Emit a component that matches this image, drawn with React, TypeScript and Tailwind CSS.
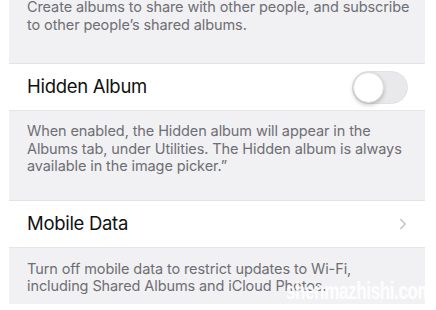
import { ChevronRight } from 'lucide-react';

function Toggle() {
  return (
    <div className="w-[56px] h-[33px] rounded-full bg-[#e9e9eb] border border-[#e2e2e4] relative">
      <div className="absolute left-[0px] top-[0px] w-[31px] h-[31px] rounded-full bg-white shadow-[0_2px_4px_rgba(0,0,0,0.22)] border border-[#dcdcdc]" />
    </div>
  );
}

export default function App() {
  return (
    <div className="w-[436px] h-[310px] bg-white overflow-hidden relative" style={{ fontFamily: 'Inter, "Liberation Sans", sans-serif' }}>
      <div className="ml-[9px] w-[416px] bg-[#f1f1f3]">
        {/* shared albums footer */}
        <div className="h-[64px] px-[18px] text-[14.5px] leading-[17.5px] text-[#6e6e73] tracking-[-0.1px] border-b border-[#e3e3e6] whitespace-nowrap">
          <p className="relative -top-[2px]">
            Create albums to share with other people, and subscribe
            <br />
            to other people’s shared albums.
          </p>
        </div>

        <div className="h-[47px] bg-white flex items-center justify-between pl-[18px] pr-[17px] border-b border-[#e6e6e8]">
          <span className="text-[18.5px] text-[#111] tracking-[-0.3px]">Hidden Album</span>
          <Toggle />
        </div>

        <div className="h-[90px] px-[18px] pt-[11px] text-[14.5px] leading-[17.5px] text-[#6e6e73] tracking-[-0.1px] border-b border-[#e3e3e6] whitespace-nowrap">
          <p>
            When enabled, the Hidden album will appear in the
            <br />
            Albums tab, under Utilities. The Hidden album is always
            <br />
            available in the image picker.”
          </p>
        </div>

        <div className="h-[47px] bg-white flex items-center justify-between pl-[18px] pr-[13px] border-b border-[#e6e6e8]">
          <span className="text-[18.5px] text-[#111] tracking-[-0.3px]">Mobile Data</span>
          <ChevronRight className="w-[18px] h-[18px] text-[#c4c4c7]" strokeWidth={2} />
        </div>

        <div className="h-[56px] px-[18px] pt-[12px] text-[14.5px] leading-[17px] text-[#6e6e73] tracking-[-0.1px] whitespace-nowrap">
          <p>
            Turn off mobile data to restrict updates to Wi-Fi,
            <br />
            including Shared Albums and iCloud Photos.
          </p>
        </div>
      </div>
      <span className="absolute left-[286px] top-[278px] text-[23px] leading-[26px] font-bold text-white/85 tracking-[-0.5px] scale-x-[0.74] origin-left whitespace-nowrap" style={{ fontFamily: '"Liberation Sans", sans-serif' }}>shenmazhishi.com</span>
    </div>
  );
}
